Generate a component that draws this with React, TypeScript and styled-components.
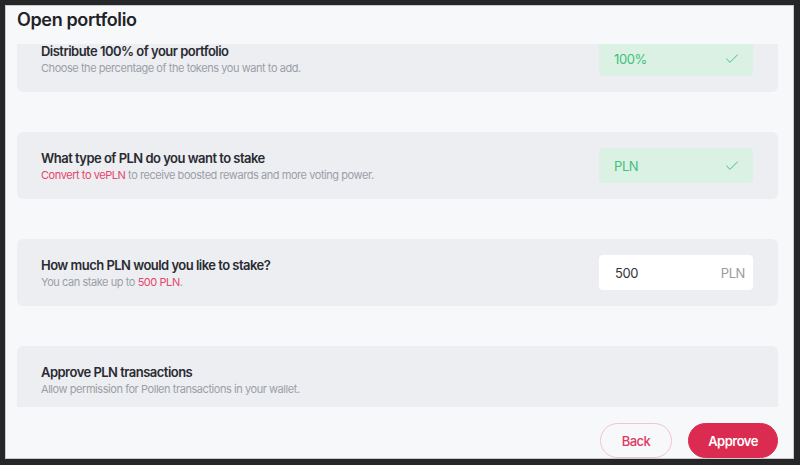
import type { ReactNode } from "react";
import styled, { createGlobalStyle } from "styled-components";
import { Check } from "lucide-react";

const GlobalStyle = createGlobalStyle`
    * { box-sizing: border-box; }
    body {
        margin: 0;
        background: #262626;
        font-family: Inter, "Noto Sans", sans-serif;
    }
`;

type Step = {
    id: string;
    title: string;
    sub: ReactNode;
    field?: "select" | "amount";
    value?: string;
};

function getSteps(): Step[] {
    return [
        {
            id: "distribute",
            title: "Distribute 100% of your portfolio",
            sub: "Choose the percentage of the tokens you want to add.",
            field: "select",
            value: "100%",
        },
        {
            id: "type",
            title: "What type of PLN do you want to stake",
            sub: (
                <>
                    <Accent>Convert to vePLN</Accent> to receive boosted
                    rewards and more voting power.
                </>
            ),
            field: "select",
            value: "PLN",
        },
        {
            id: "amount",
            title: "How much PLN would you like to stake?",
            sub: (
                <>
                    You can stake up to <Accent>500 PLN</Accent>.
                </>
            ),
            field: "amount",
            value: "500",
        },
        {
            id: "approve",
            title: "Approve PLN transactions",
            sub: "Allow permission for Pollen transactions in your wallet.",
        },
    ];
}

function App() {
    const steps = getSteps();

    return (
        <Frame>
            <GlobalStyle />
            <Panel>
                <Header>
                    <Title>Open portfolio</Title>
                </Header>
                <Scroll>
                    <StepList>
                        {steps.map((step) => (
                            <Card key={step.id}>
                                <TextBlock>
                                    <CardTitle>{step.title}</CardTitle>
                                    <CardSub>{step.sub}</CardSub>
                                </TextBlock>
                                {step.field === "select" && (
                                    <Done>
                                        <span>{step.value}</span>
                                        <Check size={16} strokeWidth={1.5} />
                                    </Done>
                                )}
                                {step.field === "amount" && (
                                    <Amount>
                                        <span>{step.value}</span>
                                        <Unit>PLN</Unit>
                                    </Amount>
                                )}
                            </Card>
                        ))}
                    </StepList>
                </Scroll>
                <Footer>
                    <Button>Back</Button>
                    <Button $primary>Approve</Button>
                </Footer>
            </Panel>
        </Frame>
    );
}

export default App;

const Frame = styled.div`
    height: 465px;
    padding: 5px 6px 6px 5px;
`;

const Panel = styled.div`
    height: 454px;
    display: flex;
    flex-direction: column;
    background: #f7f8fa;
    border: 1px solid #c9cacd;
`;

const Header = styled.div`
    height: 38px;
    flex-shrink: 0;
    padding: 3px 11px 0;
`;

const Title = styled.h1`
    margin: 0;
    font-size: 18px;
    line-height: 22px;
    font-weight: 600;
    letter-spacing: -0.02em;
    color: #222326;
`;

const Scroll = styled.div`
    flex: 1;
    overflow: hidden;
    padding: 0 15px 0 11px;
`;

const StepList = styled.div`
    display: flex;
    flex-direction: column;
    gap: 40px;
    margin-top: -19px;
`;

const Card = styled.div`
    height: 67px;
    flex-shrink: 0;
    display: flex;
    align-items: center;
    justify-content: space-between;
    padding: 0 25px 0 24px;
    background: #eceef2;
    border-radius: 6px;
`;

const TextBlock = styled.div`
    display: flex;
    flex-direction: column;
    gap: 2px;
`;

const CardTitle = styled.div`
    font-size: 13px;
    line-height: 16px;
    font-weight: 600;
    letter-spacing: -0.04em;
    color: #2a2b30;
`;

const CardSub = styled.div`
    font-size: 11px;
    line-height: 14px;
    letter-spacing: -0.04em;
    color: #9c9ea7;
`;

const Accent = styled.span`
    color: #e6466a;
`;

const Field = styled.div`
    width: 154px;
    height: 35px;
    display: flex;
    align-items: center;
    justify-content: space-between;
    border-radius: 4px;
    font-size: 13px;
    letter-spacing: -0.03em;
`;

const Done = styled(Field)`
    padding: 0 13px 0 15px;
    background: #dbf1e3;
    color: #3dc27b;
`;

const Amount = styled(Field)`
    padding: 0 8px 0 16px;
    background: #ffffff;
    color: #333438;
`;

const Unit = styled.span`
    color: #9a9ba2;
`;

const Footer = styled.div`
    height: 51px;
    flex-shrink: 0;
    display: flex;
    justify-content: flex-end;
    gap: 16px;
    padding: 16px 15px 0 0;
`;

const Button = styled.button<{ $primary?: boolean }>`
    height: 35px;
    min-width: ${(p) => (p.$primary ? "90px" : "72px")};
    padding: 0 16px;
    border-radius: 18px;
    font-family: inherit;
    font-size: 13px;
    font-weight: ${(p) => (p.$primary ? 600 : 500)};
    letter-spacing: -0.04em;
    cursor: pointer;
    border: 1px solid ${(p) => (p.$primary ? "#dc2b50" : "#f3c4ce")};
    background: ${(p) => (p.$primary ? "#dc2b50" : "transparent")};
    color: ${(p) => (p.$primary ? "#ffffff" : "#e0395f")};
`;
